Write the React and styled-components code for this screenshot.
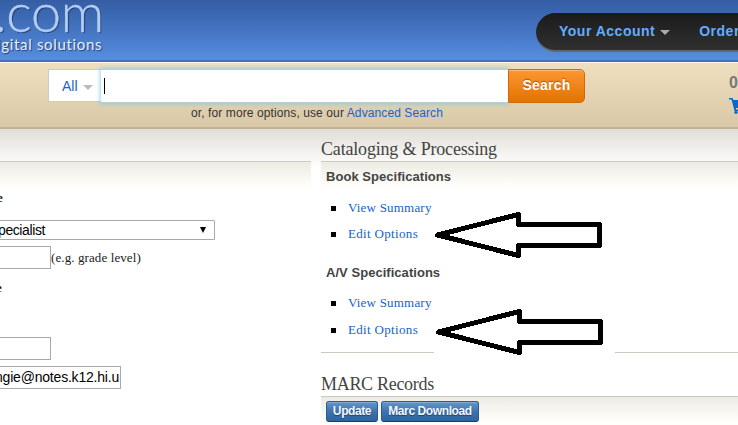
import React from "react";
import styled, { createGlobalStyle } from "styled-components";

const sans = `"Liberation Sans", Arial, sans-serif`;
const serif = `"Liberation Serif", "Times New Roman", serif`;

const GlobalStyle = createGlobalStyle`
  * {
    box-sizing: border-box;
  }

  body {
    margin: 0;
    background: #fff;
    font-family: ${sans};
    overflow: hidden;
  }

  a {
    color: #1663cc;
    text-decoration: none;
  }
`;

const Page = styled.div`
  position: relative;
  width: 738px;
  height: 425px;
  overflow: hidden;
  background: #fff;
`;

const Header = styled.header`
  display: flex;
  justify-content: space-between;
  height: 62px;
  background: linear-gradient(#345da4, #4372bf 45%, #558bdd 95%);
  border-bottom: 2px solid #4271b9;
`;

const Logo = styled.div`
  display: flex;
  flex-direction: column;
  white-space: nowrap;
`;

const LogoName = styled.div`
  height: 35px;
  margin-left: -6px;
  font: 300 54px/23px Lato, sans-serif;
  letter-spacing: -0.3px;
  color: #b3cdf1;
  -webkit-text-stroke: 0.4px #b3cdf1;
  text-shadow: 1px 1px 1px rgba(20, 45, 95, 0.8);
`;

const Tagline = styled.div`
  margin-left: -3px;
  font: 400 15px/19px Lato, sans-serif;
  letter-spacing: 0.67px;
  color: #e6f0fc;
  text-shadow: 1px 1px 1px rgba(20, 45, 95, 0.8);
`;

const AccountNav = styled.nav`
  display: flex;
  align-items: center;
  width: 202px;
  height: 39px;
  margin-top: 13px;
  padding: 0 0 1px 23px;
  overflow: hidden;
  background: linear-gradient(#1b1b1b, #303030);
  border-bottom: 2px solid #62656a;
  border-radius: 20px 0 0 20px;
`;

const NavLink = styled.a`
  font-size: 14px;
  font-weight: bold;
  letter-spacing: 0.5px;
  white-space: nowrap;
  color: #62adff;
`;

const Caret = styled.span`
  width: 0;
  height: 0;
  margin: 3px 0 0 5px;
  border: solid transparent;
  border-width: 5px 5px 0;
  border-top-color: ${props => props.color};
`;

const Separator = styled.span`
  width: 1px;
  height: 19px;
  margin: 0 13px 0 16px;
  background: #777;
`;

const SearchBar = styled.section`
  display: flex;
  height: 67px;
  padding: 6px 0 0 48px;
  background: linear-gradient(#efdfbf, #d8c8a8);
  border-top: 1px solid #fdf8ec;
  border-bottom: 2px solid #c2b294;
`;

const SearchColumn = styled.div`
  display: flex;
  flex-direction: column;
  width: 537px;
`;

const SearchForm = styled.div`
  display: flex;
  height: 34px;
`;

const Scope = styled.div`
  display: flex;
  align-items: center;
  width: 53px;
  height: 33px;
  padding-left: 13px;
  font-size: 14px;
  color: #1663cc;
  background: #fff;
  border: 1px solid #c8cbcf;
  border-right: 0;
`;

const SearchInput = styled.div`
  display: flex;
  align-items: center;
  width: 407px;
  padding-left: 3px;
  background: #fff;
  border: solid #b7cfd4;
  border-width: 1px 0;
  box-shadow: 0 0 4px 1px rgba(114, 201, 234, 0.75);
`;

const TextCursor = styled.span`
  width: 1px;
  height: 16px;
  background: #000;
`;

const SearchButton = styled.button`
  position: relative;
  width: 77px;
  padding: 0 0 2px;
  font: bold 14px ${sans};
  letter-spacing: 0.25px;
  color: #fff;
  text-shadow: 0 -1px 1px rgba(140, 65, 0, 0.7);
  background: linear-gradient(#fd9632, #e27300);
  border: 1px solid #cf6b06;
  border-radius: 0 5px 5px 0;
  box-shadow: inset 0 1px 0 #ffb872;
`;

const SearchHint = styled.div`
  padding: 2px 0 0 143px;
  font-size: 12px;
  line-height: 16px;
  letter-spacing: 0.1px;
  white-space: nowrap;
  color: #333;
`;

const Cart = styled.div`
  display: flex;
  flex-direction: column;
  margin-left: 144px;
  padding-top: 5px;
  font: bold 16px/18px ${sans};
  color: #777;
`;

const CartIcon = styled.svg`
  width: 20px;
  height: 18px;
  margin-top: 6px;
  flex: none;
`;

const Content = styled.main`
  display: flex;
  gap: 10px;
  height: 296px;
  background: linear-gradient(#e1ded7, #fff 39px);
`;

const Profile = styled.section`
  width: 311px;
`;

const ColumnHead = styled.h2`
  height: 33px;
  margin: 0;
  padding-top: 9px;
  font: normal 18px/22px ${serif};
  letter-spacing: -0.18px;
  white-space: nowrap;
  color: #444;
  border-bottom: 1px solid #cacac5;
`;

const ColumnBody = styled.div`
  height: ${props => props.height || 191}px;
  background: linear-gradient(#eeebe4, #fffefa 24px, #fff 27px);
`;

const FieldLabel = styled.div`
  height: ${props => props.height}px;
  padding-top: ${props => props.top}px;
  font: bold 13px/16px ${serif};
  margin-left: ${props => props.offset}px;
  color: #111;
`;

const Select = styled.div`
  display: flex;
  align-items: center;
  justify-content: space-between;
  width: 218px;
  height: 20px;
  margin-left: -3px;
  padding-right: 8px;
  font-size: 14px;
  letter-spacing: -0.4px;
  color: #000;
  background: #fff;
  border: 1px solid #a9a9a9;
  border-radius: 1px;
`;

const SelectArrow = styled.span`
  width: 0;
  height: 0;
  border: solid transparent;
  border-width: 6px 3px 0;
  border-top-color: #000;
`;

const FieldRow = styled.div`
  display: flex;
  align-items: center;
  height: 23px;
  margin-top: ${props => props.top}px;
  font: 13px ${serif};
  letter-spacing: 0.1px;
  color: #222;
`;

const TextField = styled.div`
  width: ${props => props.width}px;
  height: 23px;
  margin-left: -1px;
  overflow: hidden;
  font: 14px/21px ${sans};
  letter-spacing: -0.2px;
  white-space: nowrap;
  color: #000;
  background: #fff;
  border: 1px solid #a9a9a9;
`;

const FieldValue = styled.div`
  width: 124px;
  margin-left: -5px;
  overflow: hidden;
`;

const Cataloging = styled.section`
  width: 417px;
`;

const GroupTitle = styled.h3`
  height: ${props => props.height}px;
  margin: 0;
  padding: ${props => props.top}px 0 0 5px;
  font: bold 13px/16px ${sans};
  letter-spacing: 0.04px;
  white-space: nowrap;
  color: #444;
`;

const Links = styled.ul`
  display: flex;
  flex-direction: column;
  gap: ${props => props.gap}px;
  margin: 0;
  padding: 0 0 0 10px;
  list-style: none;
  font: 13px/16px ${serif};
  letter-spacing: 0.2px;

  li {
    display: flex;
    align-items: center;
    gap: 12px;
  }

  li:last-child {
    letter-spacing: 0.33px;
  }

  li::before {
    content: "";
    width: 5px;
    height: 5px;
    background: #000;
  }
`;

const Rule = styled.hr`
  height: 1px;
  margin: 0;
  border: 0;
  background: #cccabf;
`;

const MarcHead = styled(ColumnHead)`
  height: 44px;
  padding-top: 20px;
  letter-spacing: -0.3px;
`;

const Actions = styled.div`
  display: flex;
  gap: 3px;
  height: 28px;
  padding: 4px 0 0 5px;
  background: linear-gradient(#eeebe4, #fffefa 24px);
`;

const ActionButton = styled.button`
  width: ${props => props.width}px;
  height: 21px;
  padding: 0 0 2px;
  font: bold 12px/18px ${sans};
  letter-spacing: -0.4px;
  white-space: nowrap;
  color: #f4f9ff;
  text-shadow: 0 1px 1px #173e6d;
  background: linear-gradient(#6595ca, #3c70ac 55%, #2e659f);
  border: 1px solid #2b5a94;
  border-bottom-color: #193e6c;
  border-radius: 3px;
  box-shadow: inset 0 1px 0 #80aad8;
`;

// markers drawn over the page, they cover whatever is under them
const Marker = styled.div`
  position: absolute;
  left: 434px;
  top: ${props => props.top}px;
  width: 181px;
  height: 56px;
  padding-left: ${props => props.shift || 0}px;
  background: #fff;

  svg {
    display: block;
  }
`;

const Arrow = () => (
  <svg width="176" height="56" viewBox="0 0 176 56" shapeRendering="crispEdges">
    <path
      d="M3.5 28 84.5 7.5V17.5H165.5V38.5H84.5V48.5Z"
      fill="#fff"
      stroke="#000"
      strokeWidth="5"
      strokeLinejoin="round"
    />
  </svg>
);

const SpecLinks = ({ gap }) => (
  <Links gap={gap}>
    <li>
      <a href="#summary">View Summary</a>
    </li>
    <li>
      <a href="#options">Edit Options</a>
    </li>
  </Links>
);

class App extends React.Component {
  render() {
    return (
      <Page>
        <GlobalStyle />
        <Header>
          <Logo>
            <LogoName>.com</LogoName>
            <Tagline>igital solutions</Tagline>
          </Logo>
          <AccountNav>
            <NavLink href="#account">Your Account</NavLink>
            <Caret color="#aaa" />
            <Separator />
            <NavLink href="#orders">Order</NavLink>
          </AccountNav>
        </Header>

        <SearchBar>
          <SearchColumn>
            <SearchForm>
              <Scope>
                All
                <Caret color="#bbb" />
              </Scope>
              <SearchInput>
                <TextCursor />
              </SearchInput>
              <SearchButton>Search</SearchButton>
            </SearchForm>
            <SearchHint>
              or, for more options, use our <a href="#advanced">Advanced Search</a>
            </SearchHint>
          </SearchColumn>
          <Cart>
            0
            <CartIcon viewBox="0 0 20 18">
              <path d="M0 0H3.5L4.5 2H18L16 10H7V11.5H16V13H5.5L2.5 1.5H0Z" fill="#0d67ca" />
              <circle cx="7" cy="14.3" r="1.6" fill="#0d67ca" />
              <circle cx="14.5" cy="14.3" r="1.6" fill="#0d67ca" />
            </CartIcon>
          </Cart>
        </SearchBar>

        <Content>
          <Profile>
            <ColumnHead />
            <ColumnBody height={263}>
              <FieldLabel top={28} height={58} offset={-3}>
                e
              </FieldLabel>
              <Select>
                pecialist
                <SelectArrow />
              </Select>
              <FieldRow top={6}>
                <TextField width={52} />
                (e.g. grade level)
              </FieldRow>
              <FieldLabel top={11} height={68} offset={-4}>
                e
              </FieldLabel>
              <FieldRow top={0}>
                <TextField width={52} />
              </FieldRow>
              <FieldRow top={6}>
                <TextField width={122}>
                  <FieldValue>ngie@notes.k12.hi.us</FieldValue>
                </TextField>
              </FieldRow>
            </ColumnBody>
          </Profile>

          <Cataloging>
            <ColumnHead>Cataloging &amp; Processing</ColumnHead>
            <ColumnBody height={190}>
              <GroupTitle top={7} height={38}>
                Book Specifications
              </GroupTitle>
              <SpecLinks gap={10} />
              <GroupTitle top={23} height={53}>
                A/V Specifications
              </GroupTitle>
              <SpecLinks gap={11} />
            </ColumnBody>
            <Rule />
            <MarcHead>MARC Records</MarcHead>
            <Actions>
              <ActionButton width={52}>Update</ActionButton>
              <ActionButton width={98}>Marc Download</ActionButton>
            </Actions>
          </Cataloging>
        </Content>

        <Marker top={207}>
          <Arrow />
        </Marker>
        <Marker top={304} shift={1}>
          <Arrow />
        </Marker>
      </Page>
    );
  }
}

export default App;
